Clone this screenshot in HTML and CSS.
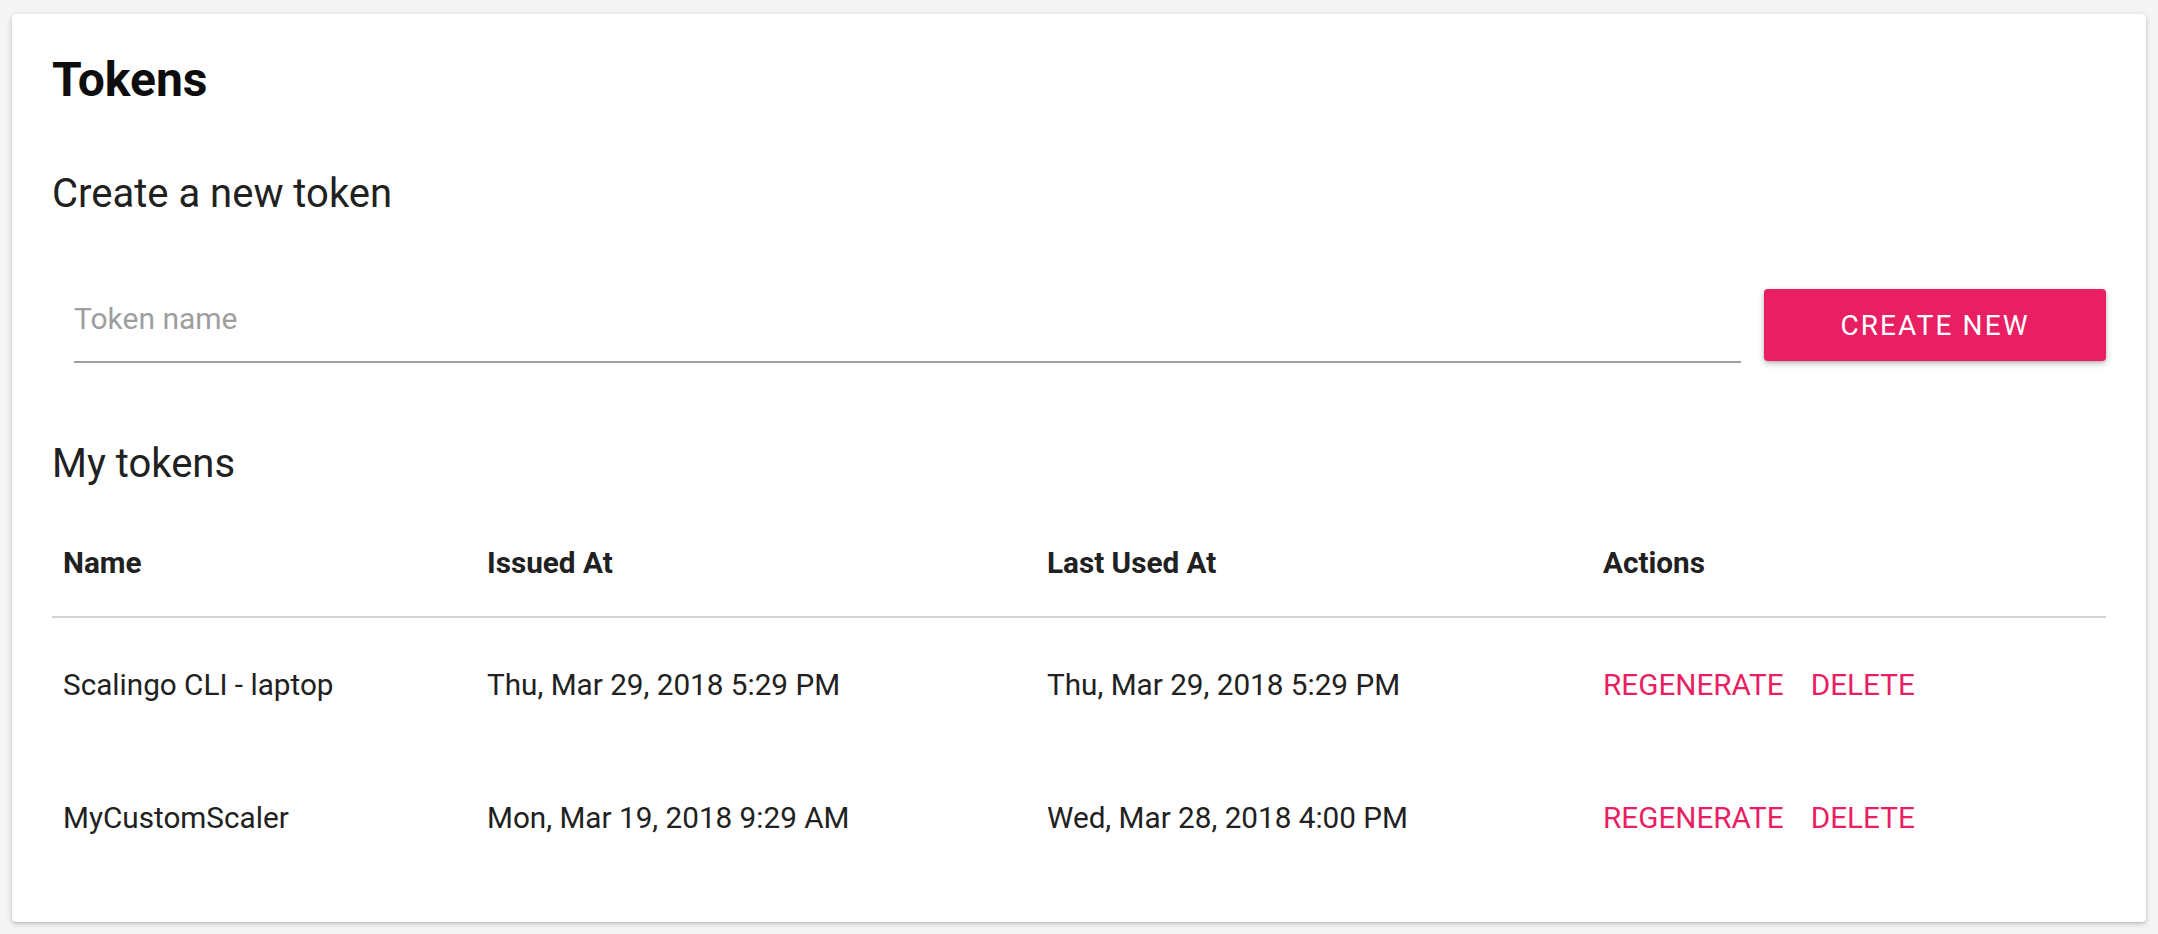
FILE: index.html
```html
<!DOCTYPE html>
<html lang="en">
<head>
<meta charset="utf-8">
<title>Tokens</title>
<link rel="stylesheet" href="styles.css">
</head>
<body>
  <main class="card">
    <h1 class="title">Tokens</h1>

    <h2 class="section-title section-create">Create a new token</h2>
    <form class="create-row" onsubmit="return false;">
      <div class="field">
        <input class="field-input" type="text" placeholder="Token name">
      </div>
      <button class="btn-primary" type="submit">CREATE NEW</button>
    </form>

    <h2 class="section-title section-list">My tokens</h2>
    <div class="tokens" role="table">
      <div class="tokens-row tokens-head" role="row">
        <div class="cell" role="columnheader">Name</div>
        <div class="cell" role="columnheader">Issued At</div>
        <div class="cell" role="columnheader">Last Used At</div>
        <div class="cell" role="columnheader">Actions</div>
      </div>
      <div class="tokens-row" role="row">
        <div class="cell" role="cell">Scalingo CLI - laptop</div>
        <div class="cell" role="cell">Thu, Mar 29, 2018 5:29 PM</div>
        <div class="cell" role="cell">Thu, Mar 29, 2018 5:29 PM</div>
        <div class="cell actions" role="cell"><a class="action" href="#">REGENERATE</a><a class="action" href="#">DELETE</a></div>
      </div>
      <div class="tokens-row" role="row">
        <div class="cell" role="cell">MyCustomScaler</div>
        <div class="cell" role="cell">Mon, Mar 19, 2018 9:29 AM</div>
        <div class="cell" role="cell">Wed, Mar 28, 2018 4:00 PM</div>
        <div class="cell actions" role="cell"><a class="action" href="#">REGENERATE</a><a class="action" href="#">DELETE</a></div>
      </div>
    </div>
  </main>
</body>
</html>
```

FILE: styles.css
```css
* { box-sizing: border-box; }

html, body {
  margin: 0;
  padding: 0;
  background: #f5f5f5;
}

body {
  padding: 14px 12px 12px 12px;
  font-family: Roboto, "Liberation Sans", Arial, sans-serif;
  color: #212121;
}

.card {
  background: #ffffff;
  border-radius: 4px;
  box-shadow: 0 2px 6px rgba(0, 0, 0, 0.18), 0 1px 2px rgba(0, 0, 0, 0.12);
  padding: 41px 40px 38px 40px;
}

.title {
  margin: 0;
  font-size: 48px;
  line-height: 49px;
  font-weight: 700;
  color: #0d0d0d;
}

.section-title {
  margin: 0;
  font-size: 40px;
  line-height: 40px;
  font-weight: 400;
  color: #212121;
}

.section-create { margin-top: 70px; }
.section-list { margin-top: 81px; }

.create-row {
  display: flex;
  align-items: flex-start;
  gap: 23px;
  margin: 75px 0 0 0;
}

.field {
  flex: 1;
  margin-left: 22px;
  height: 74px;
  padding: 14px 0 0 0;
  border-bottom: 2px solid #9e9e9e;
}

.field-input {
  display: block;
  width: 100%;
  height: 30px;
  padding: 0;
  margin: 0;
  border: none;
  outline: none;
  background: transparent;
  font-family: Roboto, "Liberation Sans", Arial, sans-serif;
  font-size: 30px;
  line-height: 30px;
  color: #212121;
}

.field-input::placeholder {
  color: #9e9e9e;
  opacity: 1;
}

.btn-primary {
  flex: 0 0 342px;
  height: 72px;
  border: none;
  border-radius: 4px;
  background: #e91e63;
  color: #ffffff;
  font-family: Roboto, "Liberation Sans", Arial, sans-serif;
  font-size: 28px;
  font-weight: 400;
  letter-spacing: 2.1px;
  box-shadow: 0 3px 6px rgba(0, 0, 0, 0.22), 0 1px 3px rgba(0, 0, 0, 0.14);
  cursor: pointer;
}

.tokens {
  margin-top: 26px;
}

.tokens-row {
  display: grid;
  grid-template-columns: 424px 560px 556px 1fr;
  align-items: center;
  height: 133px;
}

.tokens-head {
  height: 108px;
  border-bottom: 2px solid #d4d4d4;
}

.cell {
  padding-left: 11px;
  font-size: 29.7px;
  line-height: 30px;
  color: #212121;
  white-space: nowrap;
}

.tokens-head .cell {
  font-weight: 700;
}

.actions {
  display: flex;
  gap: 27px;
}

.action {
  color: #e91e63;
  text-decoration: none;
  font-size: 29.7px;
  line-height: 30px;
}
```
